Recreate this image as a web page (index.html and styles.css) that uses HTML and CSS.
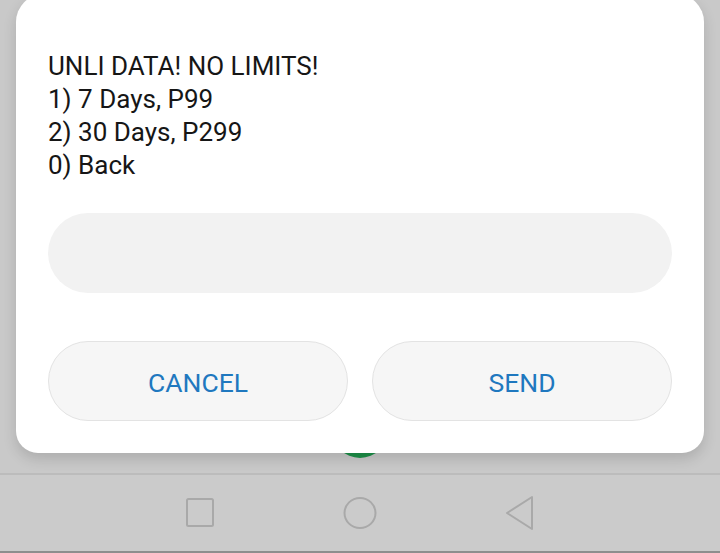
FILE: index.html
```html
<!DOCTYPE html>
<html>
<head>
<meta charset="utf-8">
<link rel="stylesheet" href="styles.css">
</head>
<body>
<div class="screen">
  <div class="backdrop">
    <div class="fab"></div>
    <div class="dialog">
      <div class="message">
        <div>UNLI DATA! NO LIMITS!</div>
        <div>1) 7 Days, P99</div>
        <div>2) 30 Days, P299</div>
        <div>0) Back</div>
      </div>
      <div class="input"></div>
      <div class="actions">
        <button class="btn">CANCEL</button>
        <button class="btn">SEND</button>
      </div>
    </div>
  </div>
  <nav class="navbar">
    <svg class="nav-icon" width="32" height="34" viewBox="0 0 32 34"><rect x="3" y="3" width="26" height="27" rx="1.5" fill="none" stroke="#a9a9a9" stroke-width="2"/></svg>
    <svg class="nav-icon" width="36" height="36" viewBox="0 0 36 36"><ellipse cx="18" cy="18" rx="15.5" ry="15" fill="none" stroke="#a9a9a9" stroke-width="2"/></svg>
    <svg class="nav-icon" width="32" height="36" viewBox="0 0 32 36"><path d="M28 2 L28 34 L3 18 Z" fill="none" stroke="#a9a9a9" stroke-width="2" stroke-linejoin="round"/></svg>
  </nav>
</div>
</body>
</html>
```
FILE: styles.css
```css
* { box-sizing: border-box; }
html, body { margin: 0; padding: 0; }
body {
  width: 720px;
  height: 553px;
  overflow: hidden;
  background: #c9c9c9;
  font-family: Roboto, "Liberation Sans", sans-serif;
}
.screen {
  display: flex;
  flex-direction: column;
  height: 553px;
}
.backdrop {
  position: relative;
  height: 473px;
  padding: 0 16px;
  background: #c9c9c9;
}
.fab {
  position: absolute;
  left: 332px;
  top: 402px;
  width: 56px;
  height: 56px;
  border-radius: 50%;
  background: #1c9048;
}
.dialog {
  position: relative;
  margin-top: -6px;
  background: #ffffff;
  border-radius: 28px 28px 22px 22px;
  padding: 56px 32px 32px 32px;
  box-shadow: 0 6px 14px rgba(0,0,0,0.14);
}
.message {
  font-size: 26px;
  line-height: 33px;
  color: #161616;
}
.input {
  margin-top: 31px;
  height: 80px;
  border-radius: 40px;
  background: #f2f2f2;
}
.actions {
  margin-top: 48px;
  display: flex;
  gap: 24px;
}
.btn {
  flex: 1;
  height: 80px;
  border-radius: 40px;
  border: 1px solid #e3e3e3;
  background: #f6f6f6;
  color: #1f78bf;
  font-family: Roboto, "Liberation Sans", sans-serif;
  font-size: 26.5px;
  padding: 2px 0 0 0;
}
.navbar {
  flex: 1;
  display: flex;
  align-items: center;
  justify-content: center;
  gap: 126px;
  background: #cbcbcb;
  border-top: 2px solid #bcbcbc;
  border-bottom: 2px solid #8e8e8e;
  padding-top: 0;
}
.nav-icon { display: block; }
```
